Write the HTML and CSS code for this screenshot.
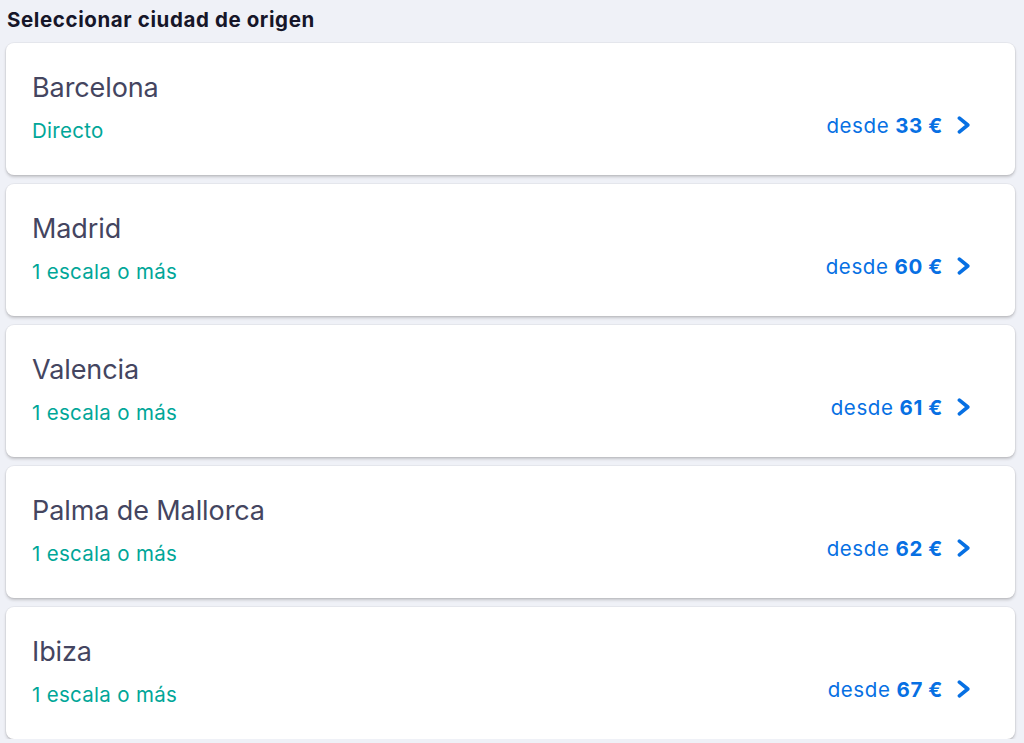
FILE: index.html
```html
<!DOCTYPE html>
<html lang="es">
<head>
<meta charset="utf-8">
<link rel="stylesheet" href="styles.css">
</head>
<body>
<div class="page">
  <h2 class="heading">Seleccionar ciudad de origen</h2>
  <ul class="list">
    <li class="card">
      <div class="info"><div class="city">Barcelona</div><div class="stops">Directo</div></div>
      <div class="price"><span>desde</span><b>33 €</b><svg class="chev" viewBox="0 0 14 18"><path d="M2.4 2.2l8.4 6.8-8.4 6.8" fill="none" stroke="currentColor" stroke-width="3.6" stroke-linecap="round" stroke-linejoin="round"/></svg></div>
    </li>
    <li class="card">
      <div class="info"><div class="city">Madrid</div><div class="stops">1 escala o más</div></div>
      <div class="price"><span>desde</span><b>60 €</b><svg class="chev" viewBox="0 0 14 18"><path d="M2.4 2.2l8.4 6.8-8.4 6.8" fill="none" stroke="currentColor" stroke-width="3.6" stroke-linecap="round" stroke-linejoin="round"/></svg></div>
    </li>
    <li class="card">
      <div class="info"><div class="city">Valencia</div><div class="stops">1 escala o más</div></div>
      <div class="price"><span>desde</span><b>61 €</b><svg class="chev" viewBox="0 0 14 18"><path d="M2.4 2.2l8.4 6.8-8.4 6.8" fill="none" stroke="currentColor" stroke-width="3.6" stroke-linecap="round" stroke-linejoin="round"/></svg></div>
    </li>
    <li class="card">
      <div class="info"><div class="city">Palma de Mallorca</div><div class="stops">1 escala o más</div></div>
      <div class="price"><span>desde</span><b>62 €</b><svg class="chev" viewBox="0 0 14 18"><path d="M2.4 2.2l8.4 6.8-8.4 6.8" fill="none" stroke="currentColor" stroke-width="3.6" stroke-linecap="round" stroke-linejoin="round"/></svg></div>
    </li>
    <li class="card">
      <div class="info"><div class="city">Ibiza</div><div class="stops">1 escala o más</div></div>
      <div class="price"><span>desde</span><b>67 €</b><svg class="chev" viewBox="0 0 14 18"><path d="M2.4 2.2l8.4 6.8-8.4 6.8" fill="none" stroke="currentColor" stroke-width="3.6" stroke-linecap="round" stroke-linejoin="round"/></svg></div>
    </li>
  </ul>
</div>
</body>
</html>
```
FILE: styles.css
```css
html, body {
  margin: 0;
  padding: 0;
  background: #eff1f7;
  font-family: Inter, "Noto Sans", "Liberation Sans", sans-serif;
}
.page {
  padding: 8px 9px 0 6px;
}
.heading {
  margin: 0 0 11px 1px;
  font-size: 20.5px;
  line-height: 24px;
  font-weight: 700;
  color: #161629;
  letter-spacing: 0.6px;
}
.list {
  list-style: none;
  margin: 0;
  padding: 0;
  display: flex;
  flex-direction: column;
  gap: 9px;
}
.card {
  background: #fff;
  border-radius: 8px;
  box-shadow: 0 0 0 1px rgba(37, 32, 31, 0.04), 0 2px 3px rgba(37, 32, 31, 0.22);
  height: 132px;
  box-sizing: border-box;
  padding: 28px 44px 0 26px;
  display: flex;
  justify-content: space-between;
  align-items: flex-start;
}
.info {
  display: flex;
  flex-direction: column;
}
.city {
  font-size: 27px;
  line-height: 34px;
  color: #444560;
  letter-spacing: -0.1px;
}
.stops {
  margin-top: 14px;
  font-size: 20.5px;
  line-height: 24px;
  color: #00a698;
  letter-spacing: 0.3px;
}
.price {
  display: flex;
  align-items: center;
  margin-top: 43px;
  font-size: 20.5px;
  line-height: 24px;
  color: #0770e3;
  letter-spacing: 0.6px;
}
.price b {
  font-weight: 700;
  margin-left: 6px;
}
.chev {
  width: 14px;
  height: 18px;
  margin-left: 14px;
  margin-top: -2px;
}
```
